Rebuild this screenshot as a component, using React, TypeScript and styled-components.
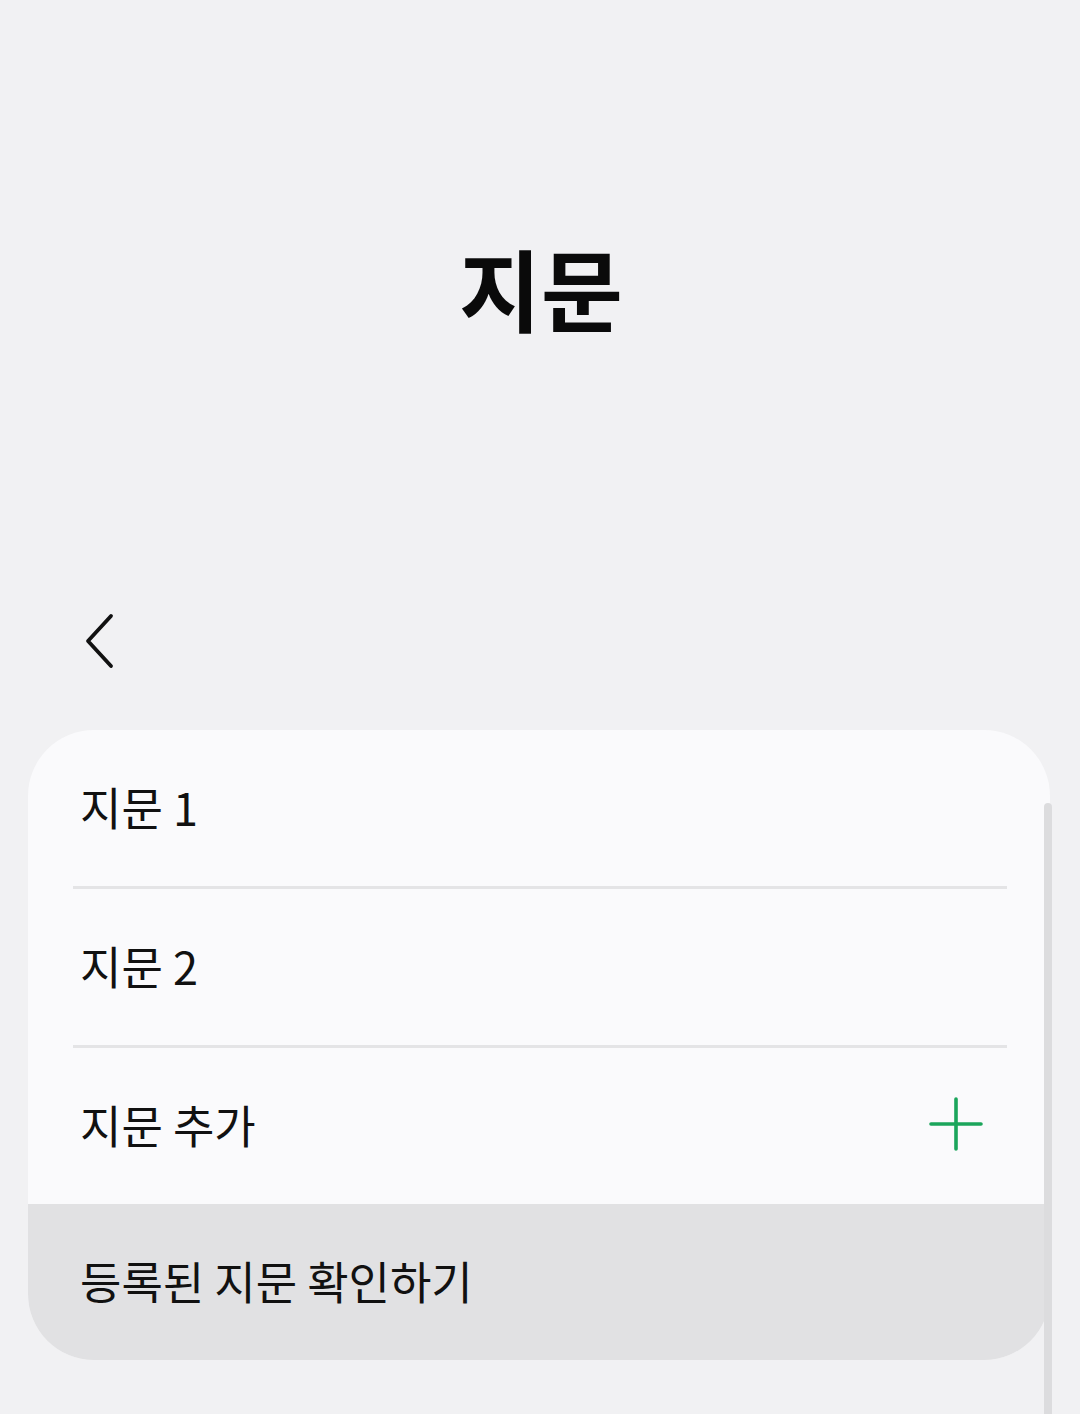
import React from "react";
import styled, { createGlobalStyle } from "styled-components";

const GlobalStyle = createGlobalStyle`
  html, body {
    margin: 0;
    padding: 0;
    background: #f1f1f3;
  }
  body {
    font-family: "Noto Sans CJK KR", "Noto Sans", sans-serif;
    color: #111;
  }
`;

const items = [
  { label: "지문 1" },
  { label: "지문 2" },
  { label: "지문 추가", add: true },
];

export default function App() {
  return (
    <>
      <GlobalStyle />
      <Page>
        <TitleArea>
          <Title>지문</Title>
        </TitleArea>
        <NavBar>
          <BackButton aria-label="뒤로">
            <svg width="40" height="56" viewBox="0 0 40 56" fill="none">
              <path
                d="M29 3 L6 28 L29 53"
                stroke="#111"
                strokeWidth="3.8"
                strokeLinecap="round"
                strokeLinejoin="round"
              />
            </svg>
          </BackButton>
        </NavBar>
        <Card>
          {items.map((item, i) => (
            <React.Fragment key={item.label}>
              {i > 0 && <Divider />}
              <Row>
                <RowLabel>{item.label}</RowLabel>
                {item.add && (
                  <svg width="56" height="56" viewBox="0 0 56 56" fill="none">
                    <path
                      d="M28 3 V53 M3 28 H53"
                      stroke="#1ba55b"
                      strokeWidth="3.6"
                      strokeLinecap="round"
                    />
                  </svg>
                )}
              </Row>
            </React.Fragment>
          ))}
          <Row $highlight>
            <RowLabel>등록된 지문 확인하기</RowLabel>
          </Row>
        </Card>
        <ScrollThumb />
      </Page>
    </>
  );
}

const Page = styled.div`
  position: relative;
  width: 1080px;
  min-height: 1414px;
  overflow: hidden;
  background: #f1f1f3;
`;

const TitleArea = styled.div`
  height: 582px;
  display: flex;
  align-items: center;
  justify-content: center;
  padding-bottom: 10px;
  box-sizing: border-box;
`;

const Title = styled.h1`
  margin: 0;
  font-size: 89px;
  font-weight: 700;
  color: #0a0a0a;
  line-height: 1;
  padding-left: 2px;
`;

const NavBar = styled.div`
  height: 148px;
  display: flex;
  align-items: flex-start;
  padding: 31px 0 0 82px;
  box-sizing: border-box;
`;

const BackButton = styled.button`
  background: none;
  border: none;
  padding: 0;
  cursor: pointer;
  display: flex;
`;

const Card = styled.div`
  margin-left: 28px;
  width: 1022px;
  background: #fafafc;
  border-radius: 66px;
  overflow: hidden;
`;

const Row = styled.div<{ $highlight?: boolean }>`
  height: 156px;
  display: flex;
  align-items: center;
  justify-content: space-between;
  padding: 0 66px 4px 52px;
  box-sizing: border-box;
  background: ${(p) => (p.$highlight ? "#e1e1e3" : "transparent")};
`;

const RowLabel = styled.span`
  font-size: 45px;
  font-weight: 400;
  color: #111;
  line-height: 1;
`;

const Divider = styled.div`
  height: 3px;
  margin: 0 43px 0 45px;
  background: #e4e4e6;
`;

const ScrollThumb = styled.div`
  position: absolute;
  left: 1044px;
  top: 803px;
  bottom: 0;
  width: 8px;
  border-radius: 4px 4px 0 0;
  background: #dcdcde;
`;
